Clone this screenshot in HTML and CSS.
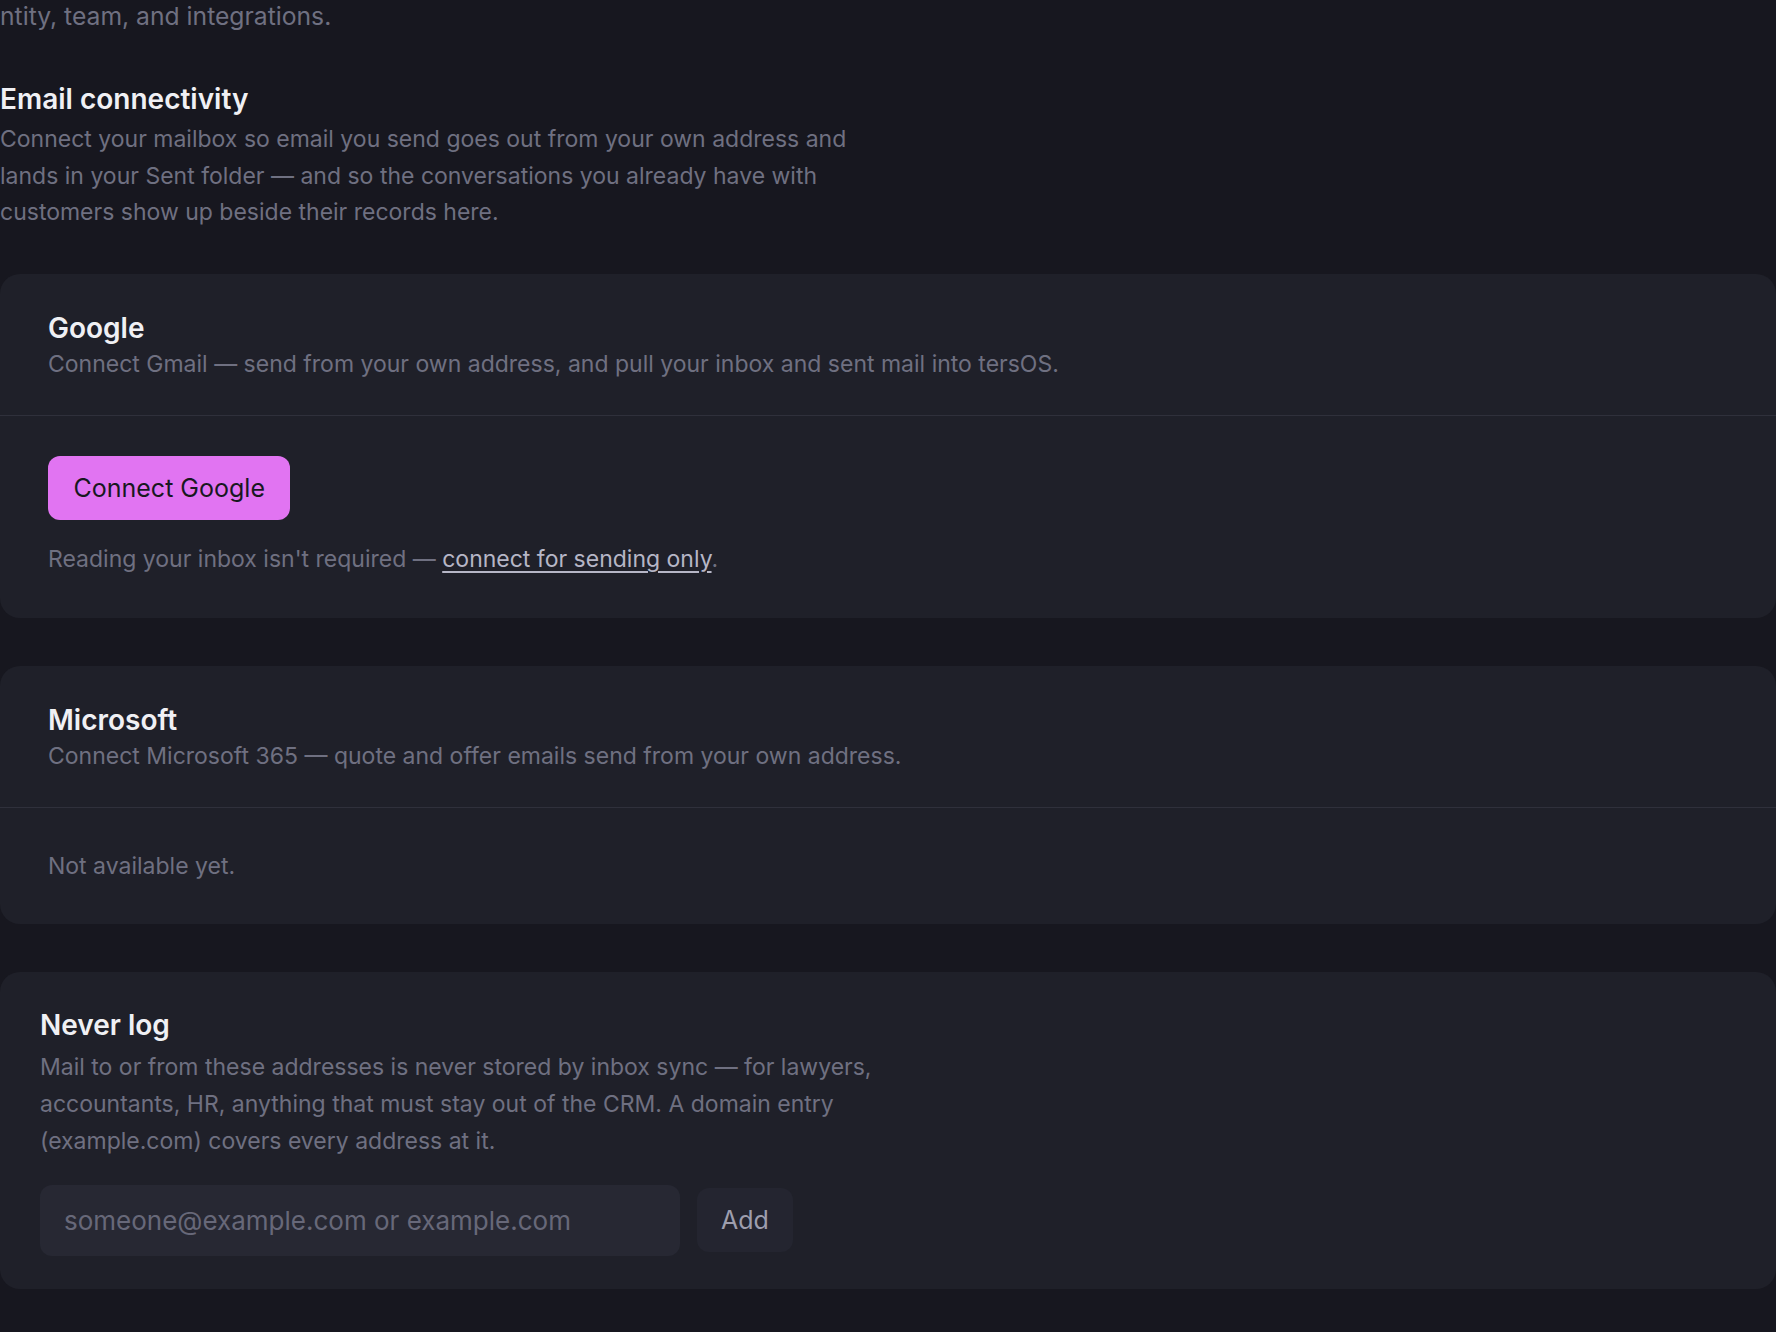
FILE: index.html
```html
<!DOCTYPE html>
<html lang="en">
  <head>
    <meta charset="UTF-8" />
    <meta name="viewport" content="width=device-width" />
    <title>Settings – Email connectivity</title>
    <link rel="stylesheet" href="styles.css">
  </head>
  <body>
    <main class="settings">
      <p class="page-lead">ntity, team, and integrations.</p>

      <section class="section-intro">
        <h2>Email connectivity</h2>
        <p class="muted">
          Connect your mailbox so email you send goes out from your own address and
          lands in your Sent folder — and so the conversations you already have with
          customers show up beside their records here.
        </p>
      </section>

      <div class="card">
        <div class="card-head">
          <h3>Google</h3>
          <p class="muted">Connect Gmail — send from your own address, and pull your inbox and sent mail into tersOS.</p>
        </div>
        <div class="card-body">
          <button class="btn-primary" type="button">Connect Google</button>
          <p class="muted note">Reading your inbox isn't required — <a href="#">connect for sending only</a>.</p>
        </div>
      </div>

      <div class="card">
        <div class="card-head">
          <h3>Microsoft</h3>
          <p class="muted">Connect Microsoft 365 — quote and offer emails send from your own address.</p>
        </div>
        <div class="card-body">
          <p class="muted">Not available yet.</p>
        </div>
      </div>

      <div class="card card-plain">
        <h3>Never log</h3>
        <p class="muted">
          Mail to or from these addresses is never stored by inbox sync — for lawyers,
          accountants, HR, anything that must stay out of the CRM. A domain entry
          (example.com) covers every address at it.
        </p>
        <form class="add-row" onsubmit="return false">
          <input type="text" placeholder="someone@example.com or example.com" />
          <button class="btn-ghost" type="submit">Add</button>
        </form>
      </div>
    </main>
  </body>
</html>
```

FILE: styles.css
```css
:root {
  --bg: #17171f;
  --card: #1f2029;
  --field: #272833;
  --line: #2f303b;
  --text: #f0f0f4;
  --muted: #6f7081;
  --accent: #e174f2;
}
* {
  box-sizing: border-box;
}
html,
body {
  margin: 0;
  background: var(--bg);
}
body {
  font-family: Inter, "Noto Sans", sans-serif;
  font-size: 23px;
  line-height: 36.8px;
  color: var(--text);
  overflow: hidden;
}
p,
h2,
h3 {
  margin: 0;
}
.muted {
  color: var(--muted);
}
.settings {
  display: flex;
  flex-direction: column;
}
.page-lead {
  color: var(--muted);
  font-size: 24.7px;
  margin-top: -2px;
}
.section-intro {
  margin-top: 47px;
}
.section-intro h2 {
  font-size: 28px;
  line-height: 34px;
  font-weight: 600;
}
.section-intro p {
  max-width: 880px;
  margin-top: 5px;
}
.card {
  background: var(--card);
  border-radius: 20px;
  margin-top: 48px;
}
.section-intro + .card {
  margin-top: 43px;
}
.card h3 {
  font-size: 28px;
  line-height: 35px;
  font-weight: 600;
}
.card-head {
  padding: 37px 48px 32px;
  border-bottom: 1px solid var(--line);
}
.card-body {
  padding: 40px 48px 40px;
}
.btn-primary {
  font: inherit;
  font-size: 25px;
  background: var(--accent);
  color: #18181f;
  border: 0;
  border-radius: 12px;
  height: 64px;
  padding: 0 25.5px;
}
.note {
  margin-top: 21px;
}
.note a {
  color: #b6b6c6;
  text-decoration: underline;
  text-underline-offset: 4px;
}
.card-plain {
  padding: 36px 40px 33px;
}
.card-plain p {
  max-width: 880px;
  margin-top: 6px;
}
.add-row {
  display: flex;
  align-items: center;
  gap: 17px;
  margin-top: 25px;
}
.add-row input {
  width: 640px;
  height: 71px;
  background: var(--field);
  border: 0;
  border-radius: 12px;
  padding: 0 24px;
  font: inherit;
  font-size: 26px;
  color: var(--text);
}
.add-row input::placeholder {
  color: #676879;
}
.btn-ghost {
  font: inherit;
  font-size: 25px;
  height: 64px;
  padding: 0 24px;
  background: #242530;
  color: #9d9eae;
  border: 0;
  border-radius: 12px;
}
```
